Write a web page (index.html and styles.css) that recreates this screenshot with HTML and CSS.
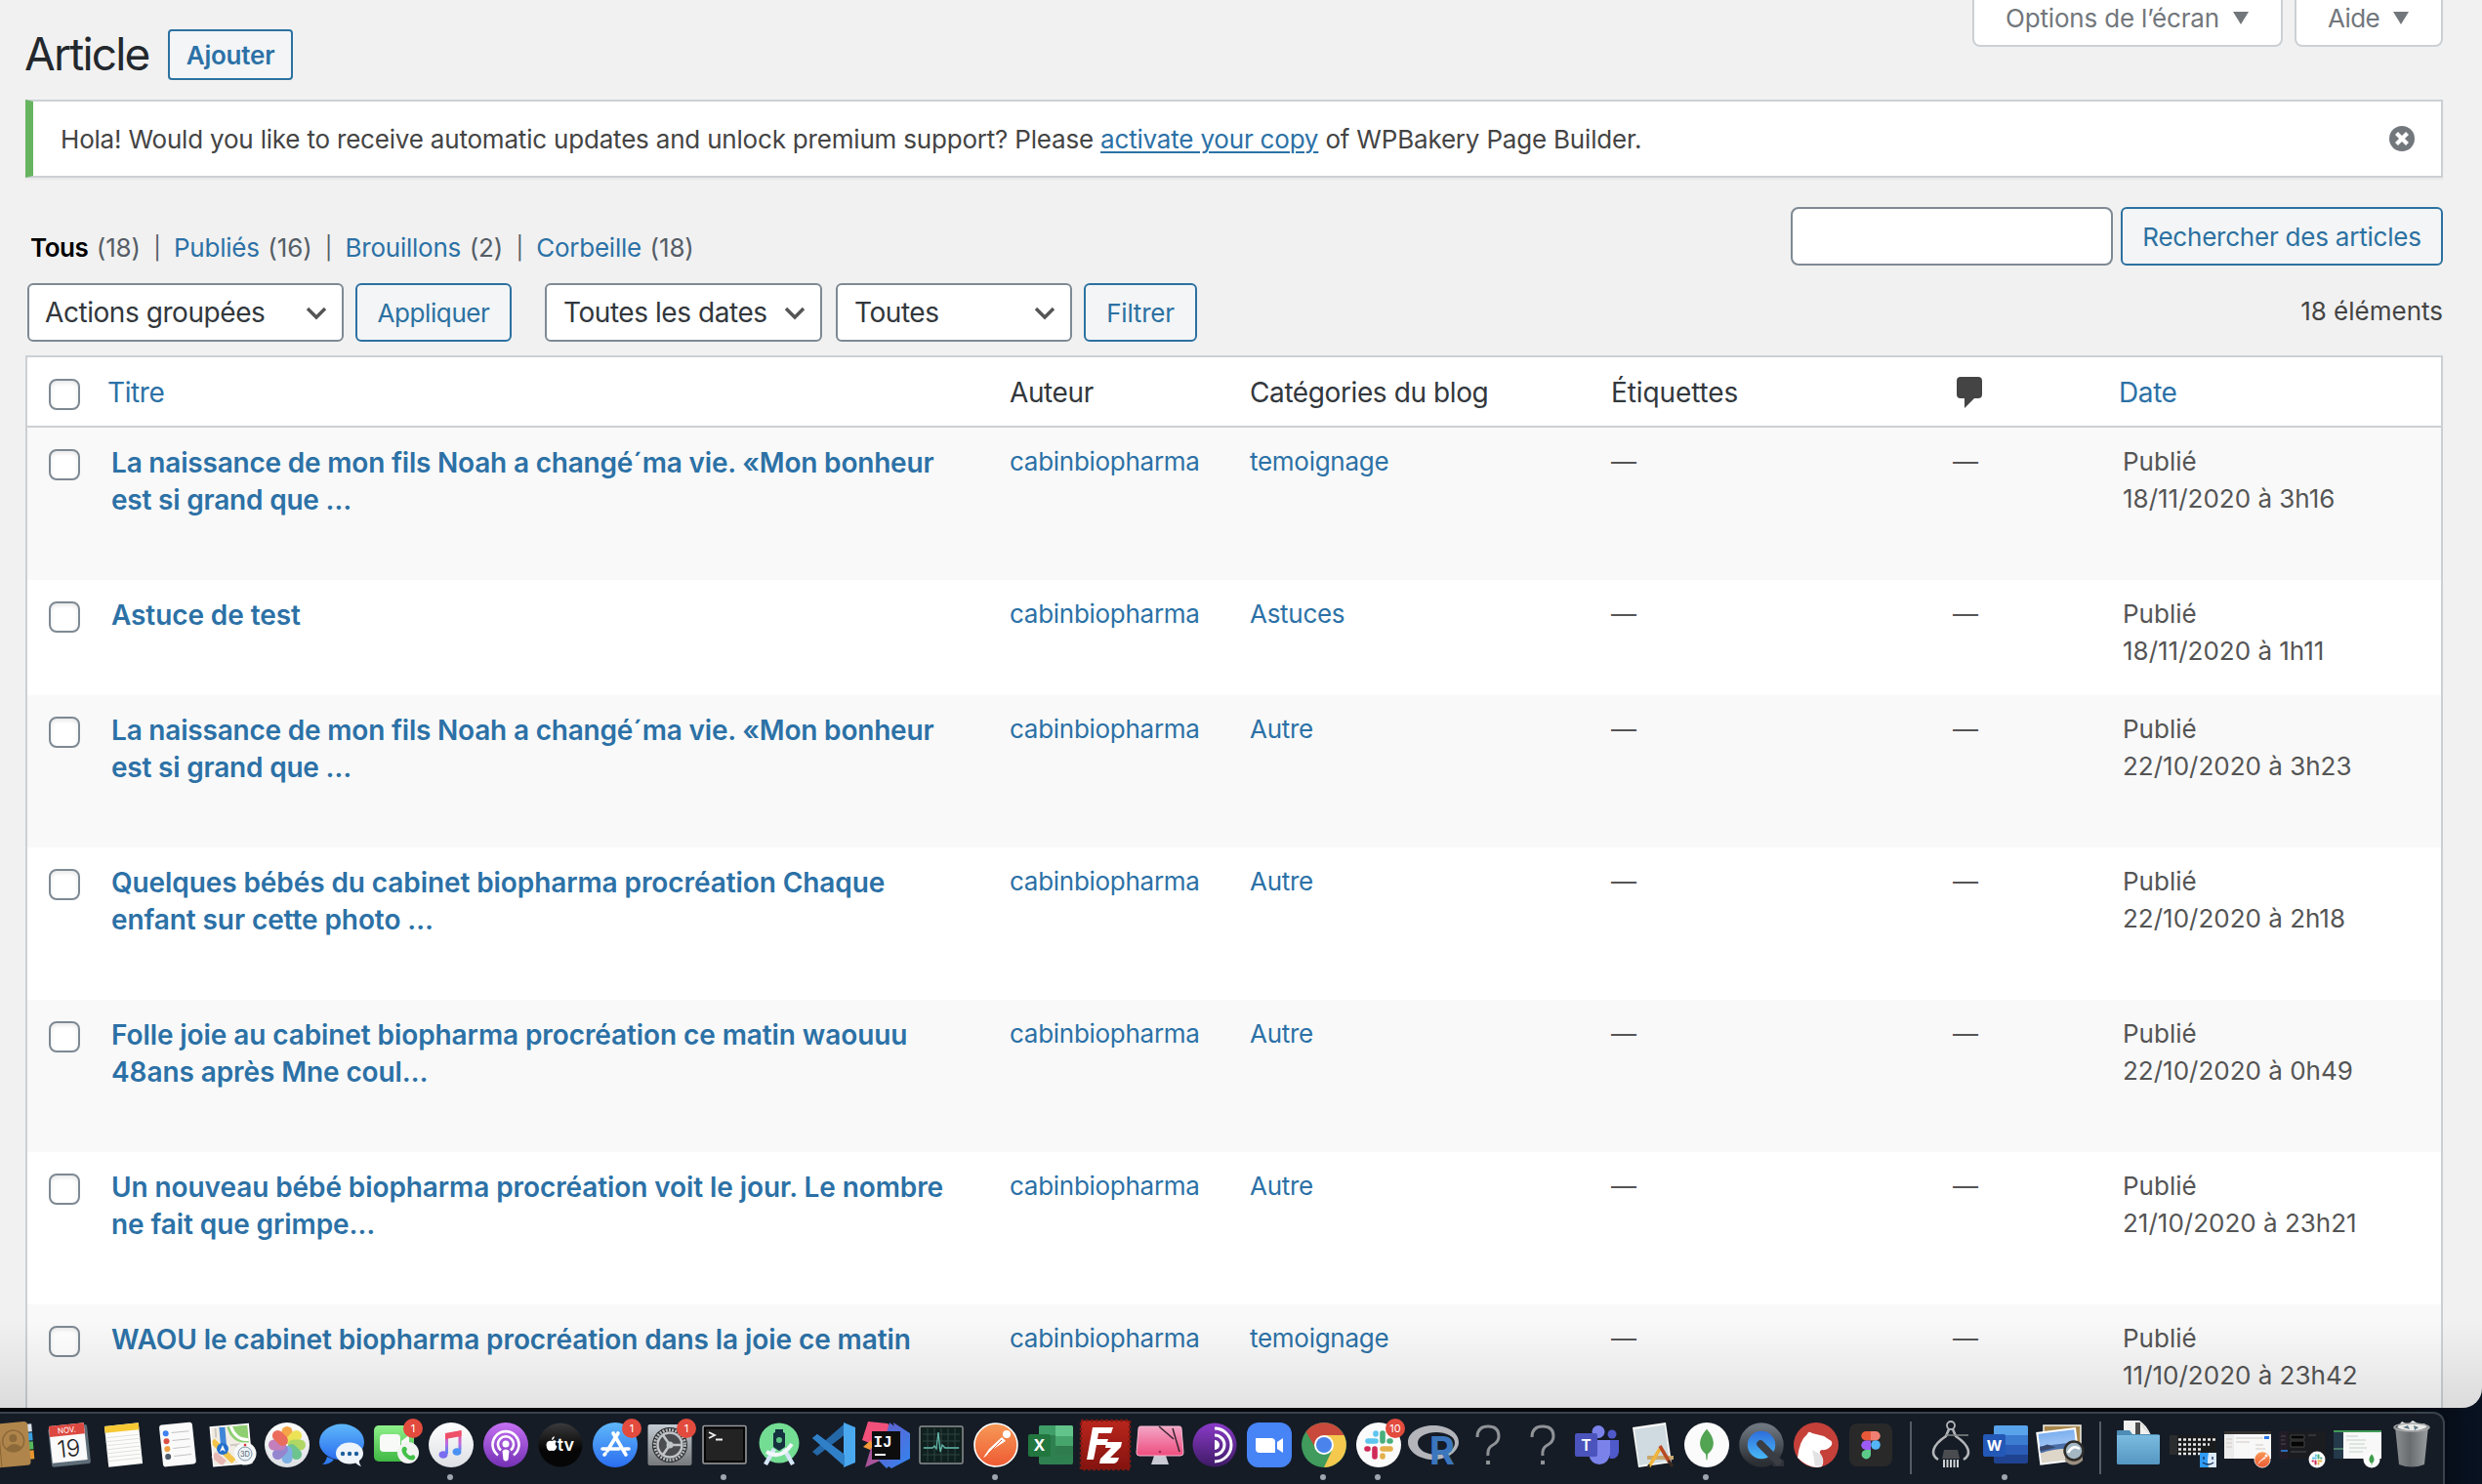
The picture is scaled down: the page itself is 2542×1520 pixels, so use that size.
FILE: index.html
```
<!DOCTYPE html>
<html lang="fr">
<head>
<meta charset="utf-8">
<title>Article</title>
<link rel="stylesheet" href="styles.css">
</head>
<body>
<div class="window">
<main class="wrap">
  <header class="page-head">
    <h1>Article</h1>
    <a class="title-action">Ajouter</a>
    <div class="screen-meta">
      <div class="meta-tab">Options de l’écran <svg width="16" height="13" viewBox="0 0 16 13"><path d="M0 0h16L8 13z" fill="#72777c"/></svg></div>
      <div class="meta-tab meta-help">Aide <svg width="16" height="13" viewBox="0 0 16 13"><path d="M0 0h16L8 13z" fill="#72777c"/></svg></div>
    </div>
  </header>

  <div class="notice">
    <p>Hola! Would you like to receive automatic updates and unlock premium support? Please <a>activate your copy</a> of WPBakery Page Builder.</p>
    <svg width="26" height="26" viewBox="0 0 26 26"><circle cx="13" cy="13" r="13" fill="#72777c"/><path d="M7.5 7.5l11 11M18.500 7.500l-11 11" stroke="#fff" stroke-width="4.200"/></svg>
  </div>

  <div class="filters-top">
    <ul class="views">
      <li><b>Tous</b> <span>(18)</span></li><li class="sep">|</li>
      <li><a>Publiés</a> <span>(16)</span></li><li class="sep">|</li>
      <li><a>Brouillons</a> <span>(2)</span></li><li class="sep">|</li>
      <li><a>Corbeille</a> <span>(18)</span></li>
    </ul>
    <div class="search"><input class="search-input" type="text"><div class="button b-search">Rechercher des articles</div></div>
  </div>

  <div class="tablenav">
    <div class="select s-actions">Actions groupées<svg class="chev" viewBox="0 0 22 14"><path d="M2 2l9 9 9-9"/></svg></div>
    <div class="button b-apply">Appliquer</div>
    <div class="select s-dates">Toutes les dates<svg class="chev" viewBox="0 0 22 14"><path d="M2 2l9 9 9-9"/></svg></div>
    <div class="select s-cats">Toutes<svg class="chev" viewBox="0 0 22 14"><path d="M2 2l9 9 9-9"/></svg></div>
    <div class="button b-filter">Filtrer</div>
    <span class="count">18 éléments</span>
  </div>

  <table class="posts">
    <colgroup><col class="c-check"><col class="c-title"><col class="c-author"><col class="c-cat"><col class="c-tags"><col class="c-comments"><col class="c-date"></colgroup>
    <thead>
      <tr><th class="check"><i class="box"></i></th><th class="h-title"><a>Titre</a></th><th>Auteur</th><th class="cat">Catégories du blog</th><th class="tags">Étiquettes</th>
      <th class="comments"><svg width="26" height="32" viewBox="0 0 26 32"><path d="M4 0h18q4 0 4 4v14q0 4-4 4h-4L8 32V22H4q-4 0-4-4V4q0-4 4-4z" fill="#444"/></svg></th><th class="h-date"><a>Date</a></th></tr>
    </thead>
    <tbody>
      <tr><td class="check"><i class="box"></i></td><td class="title snug"><a>La naissance de mon fils Noah a changé´ma vie. «Mon bonheur est si grand que …</a></td><td><a>cabinbiopharma</a></td><td class="cat"><a>temoignage</a></td><td class="tags">—</td><td class="dash">—</td><td class="date">Publié<br>18/11/2020 à 3h16</td></tr>
      <tr class="short"><td class="check"><i class="box"></i></td><td class="title"><a>Astuce de test</a></td><td><a>cabinbiopharma</a></td><td class="cat"><a>Astuces</a></td><td class="tags">—</td><td class="dash">—</td><td class="date">Publié<br>18/11/2020 à 1h11</td></tr>
      <tr><td class="check"><i class="box"></i></td><td class="title snug"><a>La naissance de mon fils Noah a changé´ma vie. «Mon bonheur est si grand que …</a></td><td><a>cabinbiopharma</a></td><td class="cat"><a>Autre</a></td><td class="tags">—</td><td class="dash">—</td><td class="date">Publié<br>22/10/2020 à 3h23</td></tr>
      <tr><td class="check"><i class="box"></i></td><td class="title"><a>Quelques bébés du cabinet biopharma procréation Chaque enfant sur cette photo …</a></td><td><a>cabinbiopharma</a></td><td class="cat"><a>Autre</a></td><td class="tags">—</td><td class="dash">—</td><td class="date">Publié<br>22/10/2020 à 2h18</td></tr>
      <tr><td class="check"><i class="box"></i></td><td class="title"><a>Folle joie au cabinet biopharma procréation ce matin waouuu 48ans après Mne coul…</a></td><td><a>cabinbiopharma</a></td><td class="cat"><a>Autre</a></td><td class="tags">—</td><td class="dash">—</td><td class="date">Publié<br>22/10/2020 à 0h49</td></tr>
      <tr><td class="check"><i class="box"></i></td><td class="title"><a>Un nouveau bébé biopharma procréation voit le jour. Le nombre ne fait que grimpe…</a></td><td><a>cabinbiopharma</a></td><td class="cat"><a>Autre</a></td><td class="tags">—</td><td class="dash">—</td><td class="date">Publié<br>21/10/2020 à 23h21</td></tr>
      <tr><td class="check"><i class="box"></i></td><td class="title"><a>WAOU le cabinet biopharma procréation dans la joie ce matin</a></td><td><a>cabinbiopharma</a></td><td class="cat"><a>temoignage</a></td><td class="tags">—</td><td class="dash">—</td><td class="date">Publié<br>11/10/2020 à 23h42</td></tr>
    </tbody>
  </table>
</main>
</div>

<svg class="defs" width="0" height="0">
  <defs>
    <linearGradient id="gWhite" x2="0" y2="1"><stop stop-color="#fff"/><stop offset="1" stop-color="#dcdfe3"/></linearGradient>
    <linearGradient id="gBlue" x2="0" y2="1"><stop stop-color="#5fb8fa"/><stop offset="1" stop-color="#2a6df0"/></linearGradient>
    <linearGradient id="gGreen" x2="0" y2="1"><stop stop-color="#8ff08a"/><stop offset="1" stop-color="#3fb843"/></linearGradient>
    <linearGradient id="gNote" x2="0" y2="1"><stop stop-color="#f0506a"/><stop offset=".5" stop-color="#c06ae0"/><stop offset="1" stop-color="#4a8af5"/></linearGradient>
    <linearGradient id="gPod" x2="0" y2="1"><stop stop-color="#c571f2"/><stop offset="1" stop-color="#7430b4"/></linearGradient>
    <linearGradient id="gTv" x2="0" y2="1"><stop stop-color="#3a3a3c"/><stop offset=".6" stop-color="#060606"/></linearGradient>
    <linearGradient id="gGrey" x2="0" y2="1"><stop stop-color="#c4ccd4"/><stop offset="1" stop-color="#77797b"/></linearGradient>
    <linearGradient id="gOrange" x2="0" y2="1"><stop stop-color="#f79a57"/><stop offset="1" stop-color="#ee5a33"/></linearGradient>
    <linearGradient id="gRed" x2="0" y2="1"><stop stop-color="#b9261d"/><stop offset="1" stop-color="#84130f"/></linearGradient>
    <linearGradient id="gPink" x2="0" y2="1"><stop stop-color="#f3a5c6"/><stop offset="1" stop-color="#ee4d7f"/></linearGradient>
    <linearGradient id="gTor" x2="0" y2="1"><stop stop-color="#8a3bc8"/><stop offset="1" stop-color="#3f1a66"/></linearGradient>
    <linearGradient id="gQ" x2="0" y2="1"><stop stop-color="#6d757e"/><stop offset="1" stop-color="#2b2e33"/></linearGradient>
    <linearGradient id="gQi" x2="0" y2="1"><stop stop-color="#2a62d8"/><stop offset="1" stop-color="#4cc4fb"/></linearGradient>
    <linearGradient id="gFolder" x2="0" y2="1"><stop stop-color="#7bbbe0"/><stop offset="1" stop-color="#5597c2"/></linearGradient>
    <linearGradient id="gTrash"><stop stop-color="#8a8d90"/><stop offset=".45" stop-color="#6a6d70"/><stop offset="1" stop-color="#9a9da0"/></linearGradient>
    <linearGradient id="gSky" x2="0" y2="1"><stop stop-color="#7aaef0"/><stop offset="1" stop-color="#c8def8"/></linearGradient>
    <linearGradient id="gIj" x2="1" y2="1"><stop stop-color="#6a5bc8"/><stop offset="1" stop-color="#2f86f2"/></linearGradient>
    <g id="slackMark" stroke-width="5.600" stroke-linecap="round">
      <path d="M-11-4h8M-3-12v1" stroke="#5ec5ee"/><path d="M4-12v8M12-4h-1" stroke="#4aaf7c"/><path d="M4 4h8M4 12v-1" stroke="#e3b04b"/><path d="M-4 4v8M-12 4h1" stroke="#cf2a58"/>
    </g>
    <g id="postmanMark"><path d="M-13 13l6-9L6-8l4 4L-4 5l-7 7z" fill="#fff"/><circle cx="11" cy="-11" r="4" fill="#fff"/><path d="M-8 9L6-5" stroke="#ee6a3c" stroke-width="1"/></g>
    <path id="leaf" d="M0-16c9 10 10 20 1 27l-.5 6h-1l-.5-6c-9-7-8-17 1-27z"/>
  </defs>
</svg>

<nav class="dock">
  <svg viewBox="-28 -32 56 72"><g transform="rotate(-5)"><path d="M14-20h6v8h-6z" fill="#d8e2ea"/><path d="M14-11h6v8h-6z" fill="#3ba0e0"/><path d="M14-2h6v8h-6z" fill="#54b85a"/><path d="M14 7h6v9h-6z" fill="#e5962e"/><rect x="-24" y="-23" width="40" height="45" rx="4" fill="#b0854b"/><path d="M-14-22v44" stroke="#8a6433"/><circle cx="0" cy="-4" r="11" fill="none" stroke="#8d6a3a" stroke-width="1.500"/><circle cx="0" cy="-7" r="4" fill="#8d6a3a"/><path d="M-8 3q8-8 16 0-8 8-16 0z" fill="#8d6a3a"/></g></svg>
  <svg viewBox="-28 -32 56 72"><g transform="rotate(-6)"><rect x="-19" y="-19" width="40" height="40" rx="2" fill="#5e6d78"/><rect x="-18" y="-21" width="36" height="38" fill="#fafafa"/><path d="M-18-21h36v11h-36z" fill="#dc4840"/><text y="-12.500" class="ic-text white" font-size="8">NOV.</text><text y="12" class="ic-text thin" font-size="24">19</text></g></svg>
  <svg viewBox="-28 -32 56 72"><g transform="rotate(-6)"><rect x="-17" y="-21" width="35" height="42" fill="#fcfcfa"/><path d="M-17-21h35v7h-35z" fill="#f6c934"/><path d="M-17-9h35M-17-5h35M-17-1h35M-17 3h35M-17 7h35M-17 11h35M-17 15h35" stroke="#e0e0de"/></g></svg>
  <svg viewBox="-28 -32 56 72"><g transform="rotate(-6)"><rect x="-17" y="-22" width="34" height="43" rx="3" fill="#fafafa"/><circle cx="-11" cy="-13" r="3" fill="#3f80f0"/><circle cx="-11" cy="-5" r="3" fill="#dc4e44"/><circle cx="-11" cy="3" r="3" fill="#eea040"/><circle cx="-11" cy="11" r="3" fill="#4e5a68"/><path d="M-5-13h18M-5-5h18M-5 3h18M-5 11h18" stroke="#c2c2c6"/></g></svg>
  <svg viewBox="-28 -32 56 72"><g transform="rotate(-5)"><rect x="-21" y="-20" width="39" height="40" fill="#f1ede4"/><path d="M-4-19h21v18q-18 0-21-18z" fill="#8fcf72"/><path d="M0-19q4 15 17 15" fill="none" stroke="#fff" stroke-width="3"/><path d="M-20-6L0 17" stroke="#f3c54a" stroke-width="6"/><path d="M-9-19V8" stroke="#3f86d8" stroke-width="6"/><path d="M-20 8l10 10" stroke="#e8b8b4" stroke-width="7"/><path d="M-16-19v10M-2 0h14M4 0v18" stroke="#cfcac2" stroke-width="2"/><rect x="-21" y="-20" width="39" height="40" fill="none" stroke="#fff" stroke-width="1.500"/></g><circle cx="-10" cy="4" r="6" fill="#2470cc"/><path d="M-10 0l3 7-3-2-3 2z" fill="#fff"/><circle cx="13" cy="9" r="11.500" fill="#f7f8f9"/><circle cx="13" cy="9" r="7" fill="#edf2f5" stroke="#7d95a6"/><text x="13" y="12" class="ic-text" font-size="7.500" fill="#536674">3D</text><circle cx="13" cy="0" r="1.300" fill="#e03030"/></svg>
  <svg viewBox="-28 -32 56 72"><circle r="23" fill="url(#gWhite)"/><g opacity=".88"><rect x="-5.500" y="-19" width="11" height="18" rx="5.500" fill="#f59a2e"/><rect x="-5.500" y="-19" width="11" height="18" rx="5.500" fill="#ece040" transform="rotate(45)"/><rect x="-5.500" y="-19" width="11" height="18" rx="5.500" fill="#a8d450" transform="rotate(90)"/><rect x="-5.500" y="-19" width="11" height="18" rx="5.500" fill="#5cbf82" transform="rotate(135)"/><rect x="-5.500" y="-19" width="11" height="18" rx="5.500" fill="#6fa8e2" transform="rotate(180)"/><rect x="-5.500" y="-19" width="11" height="18" rx="5.500" fill="#8a78cc" transform="rotate(225)"/><rect x="-5.500" y="-19" width="11" height="18" rx="5.500" fill="#bd70b4" transform="rotate(270)"/><rect x="-5.500" y="-19" width="11" height="18" rx="5.500" fill="#ea5a48" transform="rotate(315)"/></g></svg>
  <svg viewBox="-28 -32 56 72"><path d="M-15 12q-1 5-5 8 8 0 12-5z" fill="#2f7cf2"/><ellipse cy="-3" rx="23" ry="18.500" fill="url(#gBlue)"/><path d="M12 16q4 5 8 6-3-4-2-9z" fill="#eef3f8"/><ellipse cx="8" cy="8.500" rx="14" ry="11" fill="#eef4fa"/><circle cx="1" cy="9" r="2.200" fill="#1f5e9e"/><circle cx="8" cy="9" r="2.200" fill="#1f5e9e"/><circle cx="15" cy="9" r="2.200" fill="#1f5e9e"/></svg>
  <svg viewBox="-28 -32 56 72"><rect x="-23" y="-20" width="41" height="37" rx="5" fill="url(#gGreen)"/><rect x="-17" y="-11" width="21" height="18" rx="4" fill="#f7faf7"/><path d="M5-4l8-6v14l-8-4z" fill="#f7faf7"/><circle cx="12" cy="8" r="11" fill="#f2f4f2"/><path d="M6 3q3-3 5 1l-1 3q2 4 5 4l2-1q4 2 1 5-4 2-9-3-5-5-3-9z" fill="#43c148"/><circle cx="17" cy="-17" r="10" fill="#e24b3d"/><text x="17" y="-13" class="ic-text white" font-size="11">1</text></svg>
  <svg viewBox="-28 -32 56 72"><circle r="23" fill="url(#gWhite)"/><path d="M-4.500 9V-10L9-13V5" fill="none" stroke="url(#gNote)" stroke-width="3"/><path d="M-6-12L10.500-15v6L-6-6z" fill="#ee5068"/><ellipse cx="-8" cy="10" rx="4.500" ry="3.800" fill="#7a6cf0"/><ellipse cx="6" cy="7" rx="4.500" ry="3.800" fill="#4a90f5"/><circle cx="-1" cy="33" r="3" fill="#a0a5ad"/></svg>
  <svg viewBox="-28 -32 56 72"><circle r="23" fill="url(#gPod)"/><g fill="none" stroke="#fff" stroke-width="2.600"><path d="M-8 10.500a13.500 13.500 0 1 1 16 0M-5 5.500a8 8 0 1 1 10 0"/></g><circle cy="-1" r="3.500" fill="#fff"/><path d="M-3.500 6q3.500-3 7 0l-1 9q-2.500 3-5 0z" fill="#fff"/></svg>
  <svg viewBox="-28 -32 56 72"><circle r="22.500" fill="url(#gTv)"/><path d="M-8.500-4q2.500-1.500 4.500.5-3 2.500.5 5-1.500 4.500-4 4.500-1.500-.6-3 0-3.500 0-4-6 .5-5 6-4zM-9-5q0-3 2.800-4 0 3.500-2.800 4z" fill="#fff"/><text x="5.500" y="5.500" class="ic-text white semi" font-size="18">tv</text></svg>
  <svg viewBox="-28 -32 56 72"><circle r="23" fill="url(#gBlue)"/><path d="M-2-12L11 10M3-12L-8 6M-13 4H4M10 4h4M-10 9l-1 1" stroke="#fff" stroke-width="3.600" stroke-linecap="round"/><circle cx="17" cy="-17" r="10" fill="#e24b3d"/><text x="17" y="-13" class="ic-text white" font-size="11">1</text></svg>
  <svg viewBox="-28 -32 56 72"><rect x="-22.500" y="-21" width="45" height="42" rx="2" fill="url(#gGrey)"/><circle r="18" fill="#2c2e30"/><circle r="15.500" fill="none" stroke="#b4b7ba" stroke-width="3" stroke-dasharray="2 1.250"/><circle r="12.500" fill="#4a4c4f" stroke="#c2c5c8" stroke-width="2.500"/><path d="M0 0h-12M0 0l7-10M0 0l7 10" transform="rotate(180)" stroke="#c2c5c8" stroke-width="2.600"/><circle r="3.500" fill="#c2c5c8"/><circle cx="17" cy="-17" r="10" fill="#e24b3d"/><text x="17" y="-13" class="ic-text white" font-size="11">1</text></svg>
  <svg viewBox="-28 -32 56 72"><rect x="-22" y="-19.500" width="44" height="38.500" rx="1.500" fill="#232323" stroke="#9a9c9e" stroke-width="1.500"/><rect x="-20" y="-17.500" width="40" height="34.500" fill="none" stroke="#050505" stroke-width="2"/><path d="M-16-13l6 3-6 3M-9-5.500h7" stroke="#f0f0f0" stroke-width="1.800" fill="none"/><circle cx="-1" cy="33" r="3" fill="#a0a5ad"/></svg>
  <svg viewBox="-28 -32 56 72"><circle cy="-2" r="20.500" fill="#74dd94"/><path d="M-6-12l2-1v-3h8v3l2 1V2L0 6l-6-4z" fill="#15303f"/><circle cy="-5" r="3" fill="#5dc583"/><path d="M-5 4L-14 20M5 4l9 16" stroke="#d5e6f5" stroke-width="4.500"/><path d="M-13 7Q2 16 13-1" stroke="#f2f7fc" stroke-width="4" fill="none"/></svg>
  <svg viewBox="-28 -32 56 72"><path d="M-22-7l5-4L14 12v9z" fill="#2f7fc8"/><path d="M-22 7l5 4L12-11l-2-10z" fill="#2568a8"/><path d="M10-23l12 5v36l-12 5z" fill="#4aa8ee"/><path d="M-22-7l5-4L11 10v12z" fill="#3080c8"/></svg>
  <svg class="tight" viewBox="-28 -32 56 72"><path d="M-25-5l6-19 20 2 9 10-15 15z" fill="#f0507a"/><path d="M-24 2l8-7 4 12z" fill="#f29a3a"/><path d="M-16 3l-6 20 20-9z" fill="#a8559a"/><path d="M3-23L17-12v20L0 24-8 16z" fill="url(#gIj)"/><path d="M7-23L24-12V14L5 24-6 16 12 8z" fill="url(#gIj)"/><rect x="-15" y="-14" width="29" height="29" fill="#0d0d0e"/><text x="-4" y="2" class="ic-text mono white" font-size="16">IJ</text><path d="M-12 10h11" stroke="#fff" stroke-width="2"/></svg>
  <svg viewBox="-28 -32 56 72"><rect x="-22" y="-19" width="44" height="38" rx="1.500" fill="#10201e" stroke="#8c8e90" stroke-width="1.500"/><path d="M-19-11h38M-19-4h38M-19 3h38M-19 10h38M-14-17v34M-7-17v34M0-17v34M7-17v34M14-17v34" stroke="#2d4541"/><path d="M-18 3h9l2-2 2 3 2-17 2 20 2-7 3 3h14" stroke="#63b9aa" stroke-width="1.300" fill="none"/></svg>
  <svg viewBox="-28 -32 56 72"><circle r="22" fill="url(#gOrange)" stroke="#fff" stroke-width="1.600"/><use href="#postmanMark"/><circle cx="-1" cy="33" r="3" fill="#a0a5ad"/></svg>
  <svg viewBox="-28 -32 56 72"><rect x="-12" y="-20" width="35" height="40" rx="2" fill="#2f8050"/><path d="M5-20h16q2 0 2 2v9H5z" fill="#62c48a"/><path d="M-12-18q0-2 2-2H5v10h-17z" fill="#3f9e68"/><path d="M5-9h18v10H5z" fill="#46a56c"/><path d="M5 1h18v9H5z" fill="#2f7c4e"/><rect x="-23" y="-11" width="23" height="23" rx="2" fill="#22763f"/><text x="-11.500" y="6" class="ic-text white bold" font-size="16">X</text></svg>
  <svg viewBox="-28 -32 56 72"><rect x="-25" y="-25" width="50" height="50" fill="url(#gRed)" stroke="#7c1813" stroke-width="2.500" stroke-dasharray="3 2"/><path d="M-13-18H8l-2 6H-7l-1 6H3l-2 6H-9l-3 15h-7z" fill="#fff"/><path d="M1-3h16l-1 5L5 13h9q-1 5-5 6H-6l1-5L6 3H0z" fill="#fff"/></svg>
  <svg viewBox="-28 -32 56 72"><path d="M-6 11H6l3 9H-9z" fill="#c9cbd4"/><path d="M-20-19h40q2 0 2 2l2 25q0 3-3 3h-42q-3 0-3-3l2-25q0-2 2-2z" fill="url(#gPink)" stroke="#f6bdd2"/><path d="M-1-19L14-6M13-17l7 24" stroke="#3a2530" stroke-width="1.500"/><circle cy="7" r="1.300" fill="#a02a50"/></svg>
  <svg viewBox="-28 -32 56 72"><circle r="22.500" fill="url(#gTor)"/><path d="M0-5a5 5 0 0 1 0 10z" fill="#fff"/><path d="M0-10a10 10 0 0 1 0 20M0-17a17 17 0 0 1 0 34" fill="none" stroke="#fff" stroke-width="3"/></svg>
  <svg viewBox="-28 -32 56 72"><rect x="-23" y="-23" width="46" height="46" rx="12" fill="#4784f6"/><path d="M-14-7H2q4 0 4 4V8h-16q-4 0-4-4zM8-3l6-4V8L8 4z" fill="#fff"/></svg>
  <svg viewBox="-28 -32 56 72"><circle r="23" fill="#409b5c"/><path d="M-18.500-13.500A23 23 0 0 1 20.500-10H0L-8 4z" fill="#c9493c"/><path d="M0-10h20.500A23 23 0 0 1 0 23l8-17z" fill="#f4c94e"/><circle r="10" fill="#fff"/><circle r="8" fill="#4b83ec"/><circle cx="-1" cy="33" r="3" fill="#a0a5ad"/></svg>
  <svg viewBox="-28 -32 56 72"><circle r="23" fill="#fbfbfb"/><use href="#slackMark"/><circle cx="17" cy="-17" r="10" fill="#e24b3d"/><text x="17" y="-13" class="ic-text white" font-size="11">10</text><circle cx="-1" cy="33" r="3" fill="#a0a5ad"/></svg>
  <svg viewBox="-28 -32 56 72"><path fill-rule="evenodd" d="M0-20c14 0 26 7 26 17S14 15 0 15-26 7-26-3-14-20 0-20zm3 7C-7-13-16-9-16-2S-7 10 3 10 22 5 22-2 13-13 3-13z" fill="#b3b5ba"/><text x="9" y="20" class="ic-text bold" font-size="40" fill="#3b76bd">R</text></svg>
  <svg viewBox="-28 -32 56 72"><path d="M-11-8q0-11 11-11T11-9q0 6-6 9T0 11" fill="none" stroke="#8f9296" stroke-width="3"/><path d="M-2 16h4v4h-4z" fill="#8f9296"/></svg>
  <svg viewBox="-28 -32 56 72"><path d="M-11-8q0-11 11-11T11-9q0 6-6 9T0 11" fill="none" stroke="#8f9296" stroke-width="3"/><path d="M-2 16h4v4h-4z" fill="#8f9296"/></svg>
  <svg viewBox="-28 -32 56 72"><circle cx="1" cy="-13.500" r="6.500" fill="#7b83eb"/><circle cx="15" cy="-11" r="4.500" fill="#5059c9"/><path d="M8-5h14v12q-1 8-9 7z" fill="#5059c9"/><path d="M-9-5h22V9q-2 11-11 11T-9 9z" fill="#7b83eb"/><rect x="-23" y="-12" width="23" height="24" rx="2" fill="#4b53bc"/><text x="-11.500" y="6" class="ic-text white semi" font-size="16">T</text></svg>
  <svg viewBox="-28 -32 56 72"><path d="M-20-18l34-5 6 41-34 5z" fill="#fafaf8"/><path d="M-18-16l31-4.500 5 37-31 4.500z" fill="#cfdbe0"/><path d="M-5 11h27v4H-5z" fill="#c8a870"/><path d="M-3 22L8 4" stroke="#f0b53a" stroke-width="3.500"/><path d="M8 1l10 17" stroke="#b84a24" stroke-width="3.500"/><path d="M-4 23l1-3" stroke="#222" stroke-width="2"/><path d="M17 16l4 6" stroke="#3a2a20" stroke-width="3"/></svg>
  <svg viewBox="-28 -32 56 72"><circle r="23" fill="#fbfbfb"/><g transform="translate(0 -1) scale(.95)"><use href="#leaf" fill="#52a352"/></g><circle cx="-1" cy="33" r="3" fill="#a0a5ad"/></svg>
  <svg viewBox="-28 -32 56 72"><path d="M4 4l19 12v6H12z" fill="#2f3238"/><circle r="18.500" fill="url(#gQi)" stroke="url(#gQ)" stroke-width="8.500"/><path d="M-1-1l18 18" stroke="#3a3e44" stroke-width="7.500" stroke-linecap="round"/></svg>
  <svg viewBox="-28 -32 56 72"><circle r="23" fill="#c6403a"/><path d="M-19 13Q-17-5-9-11q1-4 5-1L8-9l6 4q3 1 2 5-4 6-10 5-4 1-1 5 4 6 1 12-12 4-25-9z" fill="#fff"/><path d="M-4 5q2 8 3 17l7-1q2-6-1-11z" fill="#e2e2e4"/></svg>
  <svg viewBox="-28 -32 56 72"><rect x="-22" y="-22" width="44" height="44" rx="8" fill="#292929"/><path d="M0-14h-5a4.700 4.700 0 0 0 0 9.500h5z" fill="#e8593a"/><path d="M0-14h5a4.700 4.700 0 0 1 0 9.500H0z" fill="#f08072"/><path d="M0-4.500h-5a4.700 4.700 0 0 0 0 9.500h5z" fill="#9a5cf5"/><circle cx="5" cy="0" r="4.800" fill="#54b6f8"/><path d="M0 5h-5a4.700 4.700 0 1 0 5 4.700z" fill="#5ccb8a"/></svg>
  <i class="divider d-apps"></i>
  <svg viewBox="-28 -32 56 72"><circle cy="-20" r="4" fill="none" stroke="#b4b6b9" stroke-width="1.800"/><path d="M-2-16L-5-9C-20 1-21 10-13 15M2-16L5-9C20 1 21 10 13 15" stroke="#b4b6b9" stroke-width="2.600" fill="none"/><path d="M-5-10H18" stroke="#85878a" stroke-width="1.500"/><path d="M-7 5H7l2 9H-9z" fill="#4a4c50"/><path d="M-7 15v8M-3.500 15v8M0 15v8M3.500 15v8M7 15v8" stroke="#cfd1d3" stroke-width="2"/></svg>
  <svg viewBox="-28 -32 56 72"><rect x="-12" y="-20" width="35" height="39" rx="2" fill="#1f4390"/><path d="M-12-18q0-2 2-2h31q2 0 2 2v8h-35z" fill="#58a3ea"/><path d="M-12-10h35V0h-35z" fill="#3b7bd0"/><path d="M-12 0h35v10h-35z" fill="#2a5cb8"/><rect x="-23" y="-11" width="23" height="23" rx="2" fill="#2358b6"/><text x="-11.500" y="6" class="ic-text white bold" font-size="15">W</text><circle cx="-1" cy="33" r="3" fill="#a0a5ad"/></svg>
  <svg viewBox="-28 -32 56 72"><path d="M-17-20h38V3H-17z" fill="#a8874c" stroke="#f2efe8" stroke-width="1.500"/><g transform="rotate(-7)"><rect x="-22" y="-15" width="39" height="32" fill="url(#gSky)" stroke="#fff" stroke-width="2"/><path d="M-21-1h37v7h-37z" fill="#4a6fa8"/><path d="M-21 6q16-4 37 0v10h-37z" fill="#ded6c8"/><path d="M-21 0l8-2 8 4-16 2z" fill="#39476a"/></g><path d="M5 8v8q8 9 18 0V8z" fill="#9b8f80"/><circle cx="14" cy="6" r="9.500" fill="#a4b8c4" stroke="#2e2c2a" stroke-width="2.500"/><path d="M8 8q5-9 12-4" stroke="#fff" stroke-width="2.500" fill="none"/></svg>
  <i class="divider d-files"></i>
  <svg viewBox="-28 -32 56 72"><path d="M-15-25H1q7 4 12 15h-28z" fill="#f1f1ef"/><path d="M-3-23h5v13h-5z" fill="#4c4c4c"/><path d="M1-25q2 7 12 15z" fill="#d6d6d4"/><path d="M-22-14q0-1 1-1h12l3 4h26q2 0 2 2v27q0 2-2 2h-40q-2 0-2-2z" fill="#4e8db5"/><path d="M-22-10h44v28q0 2-2 2h-40q-2 0-2-2z" fill="url(#gFolder)"/></svg>
  <svg viewBox="-28 -32 56 72"><rect x="-24" y="-10" width="48" height="20" fill="#1a1b1d"/><rect x="-24" y="-10" width="8" height="20" fill="#2b2d2f"/><path d="M-15-5.500h38M-15-.5h32M-15 4.500h24M-15 9h24" stroke="#e8e8e8" stroke-width="2.600" stroke-dasharray="3 2"/><path d="M7 8h17v15H7z" fill="#2f9cf5"/><path d="M16 8h8v15h-8q-2-6 0-15z" fill="#dceafa"/><path d="M11 12v3M20 12v3M10 18q6 4 11 0" stroke="#142a50" stroke-width="1.300" fill="none"/></svg>
  <svg viewBox="-28 -32 56 72"><rect x="-24" y="-14" width="48" height="28" fill="#f8f8f8"/><path d="M-24-14h48v3h-48z" fill="#33302f"/><path d="M-24-11h10v25h-10z" fill="#ececec"/><path d="M-22-6h6M-22-2h6M-22 2h6M-12-7h28M-12-3h14M8 0h8M8 4h10" stroke="#cfc9c6"/><path d="M17-9h5v3h-5z" fill="#2a78e8"/><g transform="translate(15 15) scale(.37)"><circle r="22" fill="url(#gOrange)" stroke="#fff" stroke-width="2"/><use href="#postmanMark"/></g></svg>
  <svg viewBox="-28 -32 56 72"><rect x="-24" y="-14" width="48" height="28" fill="#1b1c1f"/><path d="M-24-14h9v28h-9z" fill="#221c28"/><path d="M-12-10h14v4h-14zM-12-4h14v6h-14z" fill="#050505" stroke="#444"/><path d="M-22 6h7" stroke="#2a70b8" stroke-width="2"/><path d="M-22-9h5M-22-5h4M-22-1h5M-12 7h16M6-10h8" stroke="#4c4c50"/><circle cx="15" cy="15" r="8.500" fill="#fbfbfb"/><g transform="translate(15 15) scale(.37)"><use href="#slackMark"/></g></svg>
  <svg viewBox="-28 -32 56 72"><rect x="-24" y="-15" width="49" height="29" fill="#f7f8f7"/><path d="M-24-15h49v2h-49z" fill="#3f9a56"/><path d="M-24-13h10v27h-10z" fill="#24394a"/><path d="M-24 3h10v2h-10z" fill="#4b7a68"/><path d="M-11-9h12M-11-5h20M-8-1h16M-8 3h18M-8 7h14" stroke="#c4d0c8"/><circle cx="15" cy="15" r="8.500" fill="#fbfbfb"/><g transform="translate(15 15) scale(.35)"><use href="#leaf" fill="#3f9f4c"/></g></svg>
  <svg viewBox="-28 -32 56 72"><path d="M-15-18l5-6 6 3 5-4 7 4 5-1 4 5-8 6h-17z" fill="#ececea"/><path d="M-9-18l5-2 2 4zM2-20l5 2-4 3z" fill="#5f7a86"/><path d="M-17-19L-13 20q13 5 26 0l4-39q-17 9-34 0z" fill="url(#gTrash)"/><ellipse cy="-18" rx="18" ry="4" fill="none" stroke="#a6a8aa" stroke-width="1.500"/></svg>
</nav>
</body>
</html>
```
FILE: styles.css
```
* { box-sizing: border-box; }

html, body { margin: 0; height: 1520px; overflow: hidden; }

body {
  display: flex;
  flex-direction: column;
  background: linear-gradient(90deg, #03060b 0 96%, #081221);
  color: #444;
  font: 26px/38px Inter, "Liberation Sans", sans-serif;
  letter-spacing: -0.22px;
}

a { color: #2c71a6; }
svg { display: block; flex: none; }
.defs { position: absolute; }

.window {
  position: relative;
  flex: none;
  height: 1442px;
  overflow: hidden;
  background: #f1f1f1;
  border-bottom-right-radius: 20px;
}

/* shade cast by the dock on the foot of the window */
.window::after {
  content: "";
  position: absolute;
  inset: auto 0 0;
  height: 90px;
  background: linear-gradient(rgba(0, 0, 0, 0), rgba(0, 0, 0, .09));
}

.wrap { padding: 0 40px 0 26px; }

/* Heading */
.page-head { display: flex; align-items: flex-start; height: 102px; }

h1 {
  width: 146px;
  margin: 25px 0 0;
  color: #23282d;
  font-size: 46px;
  font-weight: 400;
  line-height: 60px;
  letter-spacing: -1.8px;
  text-indent: -1px;
}

.title-action {
  width: 128px;
  height: 52px;
  margin-top: 30px;
  border: 2px solid #2c71a1;
  border-radius: 4px;
  background: #f3f5f6;
  font-weight: 600;
  line-height: 49px;
  text-align: center;
}

.screen-meta { display: flex; gap: 12px; margin-left: auto; color: #72777c; }

.meta-tab {
  display: flex;
  gap: 14px;
  width: 318px;
  height: 48px;
  padding-left: 32px;
  border: 2px solid #ccd0d4;
  border-top: 0;
  border-radius: 0 0 8px 8px;
  background: #fff;
  line-height: 37px;
  letter-spacing: -.18px;
}
.meta-help { width: 152px; padding-left: 32px; letter-spacing: -.6px; }
.meta-tab svg { margin-top: 12px; }

/* Notice */
.notice {
  display: flex;
  align-items: center;
  justify-content: space-between;
  height: 80px;
  padding: 0 27px 0 28px;
  border: 2px solid #ccd0d4;
  border-left: 8px solid #66b45f;
  background: #fff;
  box-shadow: 0 2px 2px rgba(0, 0, 0, .04);
}
.notice p { margin: 2px 0 0; letter-spacing: -.195px; }
.notice a { text-decoration: underline; text-decoration-thickness: 2px; text-underline-offset: 3px; }

/* Views and search */
.filters-top { display: flex; justify-content: space-between; height: 60px; margin-top: 30px; }

.views {
  display: flex;
  margin: 22px 0 0;
  padding: 0 0 0 5px;
  color: #555d66;
  line-height: 40px;
  list-style: none;
}
.views a { letter-spacing: -.24px; }
.views b { color: #000; font-weight: 600; letter-spacing: -.5px; }
.views .sep { width: 34px; font-size: 23px; text-align: center; }
.views span { margin-left: 1.5px; letter-spacing: -.1px; }

.search { display: flex; gap: 8px; }
.search-input { width: 330px; border: 2px solid #7e8993; border-radius: 8px; background: #fff; }

.button {
  height: 60px;
  border: 2px solid #2c71a1;
  border-radius: 6px;
  background: #f3f5f6;
  color: #2c71a1;
  line-height: 57px;
  text-align: center;
}
.b-search { width: 330px; }

/* Bulk actions */
.tablenav { display: flex; height: 60px; margin: 18px 0 14px; padding-left: 2px; }

.select {
  display: flex;
  align-items: center;
  justify-content: space-between;
  padding: 0 15px 0 16px;
  border: 2px solid #7e8993;
  border-radius: 6px;
  background: #fff;
  color: #32373c;
  font-size: 28px;
  letter-spacing: -.44px;
}
.chev { width: 22px; height: 14px; margin-top: 2px; fill: none; stroke: #555; stroke-width: 3.4; }
.s-actions { width: 324px; }
.b-apply { width: 160px; margin: 0 34px 0 12px; letter-spacing: -.4px; }
.s-dates { width: 284px; padding-left: 17px; }
.s-cats { width: 242px; margin: 0 12px 0 14px; padding-left: 17px; }
.b-filter { width: 116px; }
.count { margin: 10px 0 0 auto; letter-spacing: 0; }

/* Posts */
.posts {
  width: 2476px;
  border: 2px solid #ccd0d4;
  border-collapse: separate;
  border-spacing: 0;
  background: #fff;
  table-layout: fixed;
}
.c-check { width: 67px; }
.c-title { width: 920px; }
.c-author { width: 245px; }
.c-cat { width: 370px; }
.c-tags { width: 350px; }
.c-comments { width: 175px; }
.c-date { width: 345px; }

th {
  height: 72px;
  padding: 17px 0 0 19px;
  border-bottom: 2px solid #ccd0d4;
  color: #32373c;
  font-size: 28px;
  font-weight: 400;
  letter-spacing: -.4px;
  text-align: left;
  vertical-align: top;
}
td { height: 156px; padding: 16px 0 0 19px; color: #555; vertical-align: top; }
td a { letter-spacing: -.28px; }
tbody tr:nth-child(odd) { background: #f9f9f9; }
.short td { height: 118px; }

.posts .check { padding: 22px 0 0 22px; }
.box {
  display: block;
  width: 32px;
  height: 32px;
  border: 2px solid #7e8993;
  border-radius: 8px;
  background: #fff;
  box-shadow: inset 0 2px 4px rgba(0, 0, 0, .1);
}
.h-title { padding-left: 15px; }
.h-date { padding-left: 15px; }
.posts .comments { padding: 20px 0 0 24px; }
.posts .cat { padding-left: 20px; }
.posts .tags { padding-left: 20px; }
.posts th.tags { letter-spacing: -.1px; }
.title { padding: 17px 25px 0 19px; font-size: 28px; font-weight: 600; }
.title a { letter-spacing: -.09px; }
.snug a { letter-spacing: -.2px; }
.posts .dash { padding-left: 20px; }
.date { padding-left: 19px; letter-spacing: 0; }

/* Dock */
.dock {
  display: flex;
  flex: none;
  width: 2518px;
  height: 76px;
  margin: 4px 0 0 -14px;
  border: 2px solid #3a424c;
  border-width: 2px 2px 0 0;
  border-top-right-radius: 12px;
  background: #151c26;
}
.dock svg { width: 56px; height: 72px; }
.dock .tight { margin-left: -2px; }
.divider { flex: none; width: 2px; height: 54px; margin-top: 8px; background: #555c66; }
.d-apps { margin-left: 12px; margin-right: 12px; }
.d-files { margin-left: 12px; margin-right: 10px; }

.ic-text { font-family: Inter, sans-serif; letter-spacing: 0; text-anchor: middle; }
.ic-text.white { fill: #fff; }
.ic-text.thin { font-weight: 300; fill: #222; }
.ic-text.semi { font-weight: 600; }
.ic-text.bold { font-weight: 700; }
.ic-text.mono { font-family: "Liberation Mono", monospace; font-weight: 700; }
```
